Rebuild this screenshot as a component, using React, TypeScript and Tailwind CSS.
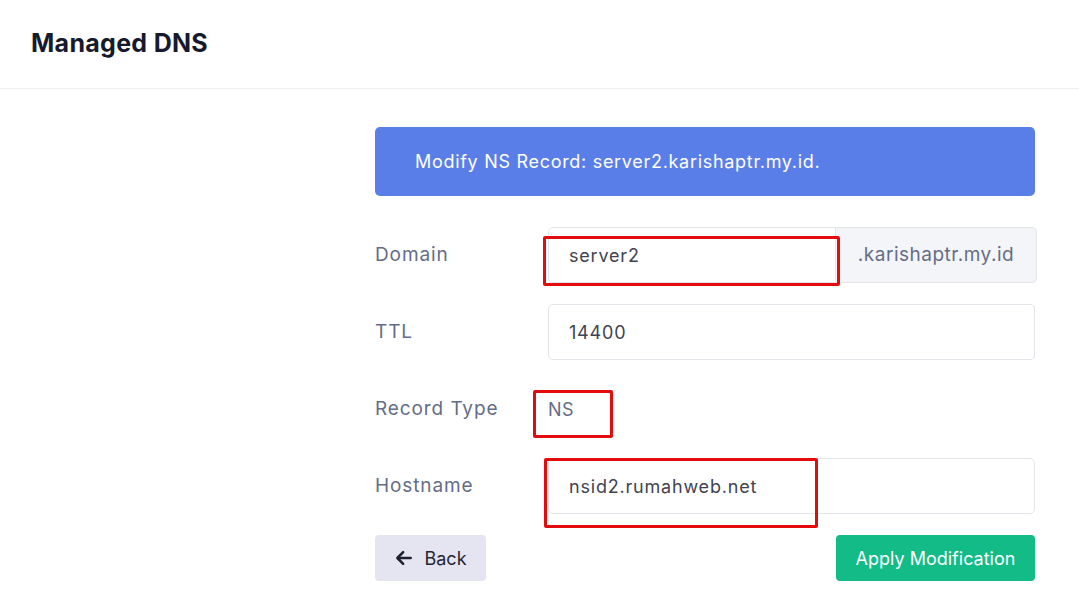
import React from 'react'

const font = { fontFamily: 'Inter, "Open Sans", sans-serif' }

function Row({ label, children }: { label: string; children: React.ReactNode }) {
  return (
    <div className="flex items-center">
      <div className="w-[173px] shrink-0 text-[19px] tracking-[0.9px] text-[#646d87]">{label}</div>
      <div className="flex-1">{children}</div>
    </div>
  )
}

// red annotation box drawn over the form
function Mark({ className }: { className: string }) {
  return <div className={`pointer-events-none absolute rounded-[2px] border-[3px] border-[#e30b0b] ${className}`} />
}

export default function App() {
  return (
    <div className="min-h-[600px] bg-white" style={font}>
      <header className="h-[89px] border-b border-[#eceef2] px-[31px] flex items-center">
        <h1 className="text-[25px] font-bold text-[#171a2e] tracking-[0.3px]">Managed DNS</h1>
      </header>

      <main className="ml-[375px] w-[660px] pt-[38px]">
        <div className="h-[69px] rounded-[5px] bg-[#5a7ee8] flex items-center px-[40px] text-[18px] tracking-[0.7px] text-white">
          Modify NS Record: server2.karishaptr.my.id.
        </div>

        <div className="relative mt-[31px] flex flex-col gap-[21px]">
          <Row label="Domain">
            <div className="flex h-[56px] w-[489px]">
              <div className="flex-1 flex items-center rounded-l-[5px] border border-[#e3e5ea] px-[20px] text-[18px] tracking-[0.8px] text-[#3f4350]">
                server2
              </div>
              <div className="w-[201px] flex items-center justify-center rounded-r-[5px] border border-l-0 border-[#e3e5ea] bg-[#f4f5f8] text-[19px] tracking-[0.5px] text-[#646d87]">
                .karishaptr.my.id
              </div>
            </div>
          </Row>
          <Row label="TTL">
            <div className="h-[56px] flex items-center rounded-[5px] border border-[#e3e5ea] px-[20px] text-[18px] tracking-[0.8px] text-[#3f4350]">
              14400
            </div>
          </Row>
          <Row label="Record Type">
            <div className="h-[56px] flex items-center text-[18px] tracking-[0.5px] text-[#646d87]">NS</div>
          </Row>
          <Row label="Hostname">
            <div className="h-[56px] flex items-center rounded-[5px] border border-[#e3e5ea] px-[20px] text-[18px] tracking-[0.8px] text-[#3f4350]">
              nsid2.rumahweb.net
            </div>
          </Row>

          <Mark className="left-[168px] top-[9px] w-[297px] h-[50px]" />
          <Mark className="left-[158px] top-[163px] w-[80px] h-[48px]" />
          <Mark className="left-[169px] top-[231px] w-[274px] h-[70px]" />
        </div>

        <div className="mt-[21px] flex justify-between">
          <button className="h-[46px] w-[111px] rounded-[4px] bg-[#e4e5f1] flex items-center justify-center gap-[10px] text-[18px] text-[#232634]">
            <svg width="20" height="20" viewBox="0 0 24 24" fill="none" stroke="#1d2030" strokeWidth="3" strokeLinecap="round" strokeLinejoin="round">
              <path d="M20 12H5" />
              <path d="M11 5l-7 7 7 7" />
            </svg>
            Back
          </button>
          <button className="h-[46px] w-[199px] rounded-[4px] bg-[#13bb87] text-[18px] text-white">
            Apply Modification
          </button>
        </div>
      </main>
    </div>
  )
}
